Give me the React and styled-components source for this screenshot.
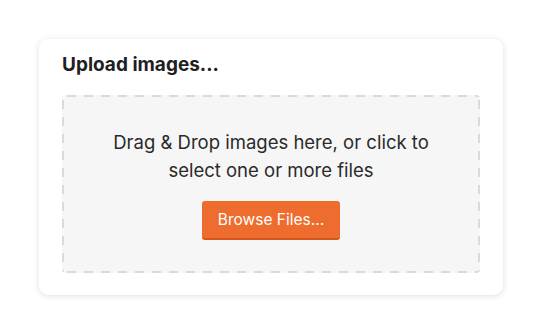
import React from 'react'
import styled, { createGlobalStyle } from 'styled-components'

const GlobalStyle = createGlobalStyle`
  body {
    margin: 0;
    background: #fff;
    font-family: Inter, "Noto Sans", sans-serif;
    color: #222;
  }
`

const Page = styled.div`
  padding: 39px 40px 39px 39px;
`

const Card = styled.div`
  width: 464px;
  box-sizing: border-box;
  padding: 14px 23px 22px;
  background: #fff;
  border-radius: 9px;
  box-shadow: 0 1px 6px rgba(0, 0, 0, 0.13);
`

const Title = styled.h2`
  margin: 0 0 18px;
  font-size: 19px;
  line-height: 24px;
  font-weight: 700;
  color: #1f1f1f;
`

// dashed edge drawn with gradients so the dash length matches (about 9px on, 8px off)
const dash = '#dadada'

const DropZone = styled.div`
  height: 178px;
  box-sizing: border-box;
  display: flex;
  flex-direction: column;
  align-items: center;
  justify-content: center;
  gap: 17px;
  border-radius: 4px;
  background-color: #f6f6f6;
  background-image:
    repeating-linear-gradient(90deg, ${dash} 0 9px, transparent 9px 17px),
    repeating-linear-gradient(90deg, ${dash} 0 9px, transparent 9px 17px),
    repeating-linear-gradient(180deg, ${dash} 0 9px, transparent 9px 17px),
    repeating-linear-gradient(180deg, ${dash} 0 9px, transparent 9px 17px);
  background-size: 100% 2px, 100% 2px, 2px 100%, 2px 100%;
  background-position: 5px 0, 5px 100%, 0 5px, 100% 5px;
  background-repeat: no-repeat;
`

const Hint = styled.p`
  margin: 0;
  width: 340px;
  text-align: center;
  font-size: 18.5px;
  line-height: 28px;
  color: #2a2a2a;
`

const BrowseButton = styled.button`
  height: 39px;
  padding: 0 16px;
  font-family: inherit;
  font-size: 15.5px;
  color: #fff;
  background: #ee6c2d;
  border: none;
  border-bottom: 2px solid #d4561b;
  border-radius: 3px;
  cursor: pointer;
`

const App = () => (
  <>
    <GlobalStyle />
    <Page>
      <Card>
        <Title>Upload images...</Title>
        <DropZone>
          <Hint>Drag &amp; Drop images here, or click to select one or more files</Hint>
          <BrowseButton>Browse Files...</BrowseButton>
        </DropZone>
      </Card>
    </Page>
  </>
)

export default App
